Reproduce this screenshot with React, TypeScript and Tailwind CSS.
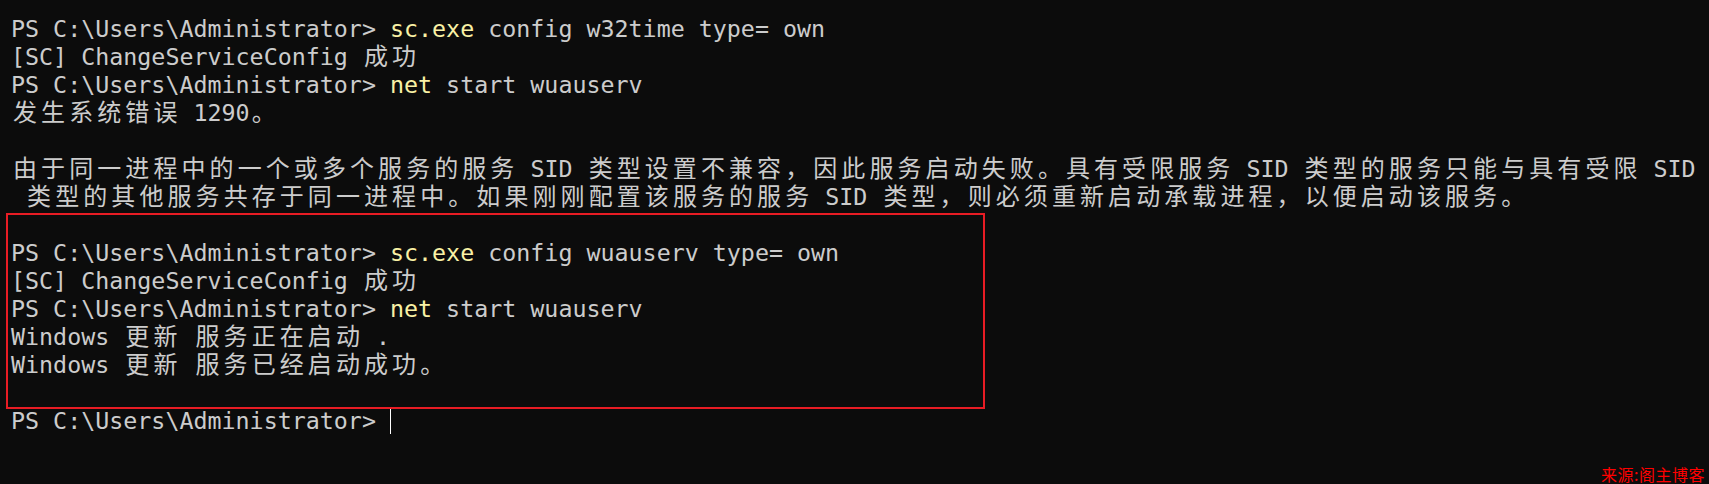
import React from "react";

type Seg = { t: string; y?: boolean };

const isWide = (c: string) => /[\u3000-\u9fff\uff00-\uffef]/.test(c);

function renderSeg(seg: Seg, key: number) {
  const color = seg.y ? "text-[#f9f1a5]" : "text-[#cccccc]";
  const out: React.ReactNode[] = [];
  let buf = "";
  let k = 0;
  const flush = () => {
    if (buf) {
      out.push(
        <span key={k++} className={color}>
          {buf}
        </span>
      );
      buf = "";
    }
  };
  for (const c of Array.from(seg.t)) {
    if (isWide(c)) {
      flush();
      out.push(
        <span
          key={k++}
          className={`inline-block w-[28.08px] text-center text-[24px] leading-[20px] font-['Noto_Sans_CJK_SC',sans-serif] ${color}`}
        >
          {c}
        </span>
      );
    } else {
      buf += c;
    }
  }
  flush();
  return <React.Fragment key={key}>{out}</React.Fragment>;
}

const P = "PS C:\\Users\\Administrator> ";

const rows: Seg[][] = [
  [{ t: P }, { t: "sc.exe", y: true }, { t: " config w32time type= own" }],
  [{ t: "[SC] ChangeServiceConfig 成功" }],
  [{ t: P }, { t: "net", y: true }, { t: " start wuauserv" }],
  [{ t: "发生系统错误 1290。" }],
  [],
  [
    {
      t: "由于同一进程中的一个或多个服务的服务 SID 类型设置不兼容，因此服务启动失败。具有受限服务 SID 类型的服务只能与具有受限 SID",
    },
  ],
  [{ t: " 类型的其他服务共存于同一进程中。如果刚刚配置该服务的服务 SID 类型，则必须重新启动承载进程，以便启动该服务。" }],
  [],
  [{ t: P }, { t: "sc.exe", y: true }, { t: " config wuauserv type= own" }],
  [{ t: "[SC] ChangeServiceConfig 成功" }],
  [{ t: P }, { t: "net", y: true }, { t: " start wuauserv" }],
  [{ t: "Windows 更新 服务正在启动 ." }],
  [{ t: "Windows 更新 服务已经启动成功。" }],
  [],
];

export default function App() {
  return (
    <div className="relative w-full h-[484px] overflow-hidden bg-[#0c0c0c]">
      <div className="pl-[11px] pt-[15px] font-['DejaVu_Sans_Mono',monospace] text-[23.32px] leading-[28px] text-[#cccccc]">
        {rows.map((r, i) => (
          <div key={i} className="h-[28px] whitespace-pre">
            {r.map((s, j) => renderSeg(s, j))}
          </div>
        ))}
        <div className="h-[28px] whitespace-pre">
          <span>{P}</span>
          <span className="inline-block align-top w-px h-[27px] bg-white" />
        </div>
      </div>

      <div className="absolute left-[6px] top-[213px] w-[979px] h-[196px] border-2 border-[#e81c24]" />

      <div className="absolute left-[1601px] top-[464px] whitespace-nowrap text-[16px] leading-[20px] tracking-[0.5px] text-[#ff0000] font-['Noto_Sans_CJK_SC',sans-serif]">
        来源:阁主博客
      </div>
    </div>
  );
}
